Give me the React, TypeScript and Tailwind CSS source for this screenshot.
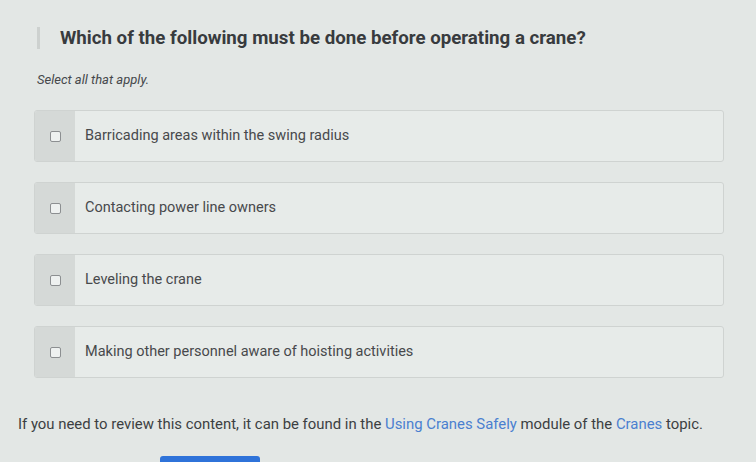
const options = [
  'Barricading areas within the swing radius',
  'Contacting power line owners',
  'Leveling the crane',
  'Making other personnel aware of hoisting activities',
]

export default function App() {
  return (
    <div className="h-[462px] w-[756px] overflow-hidden bg-[#e3e7e5] font-['Roboto',sans-serif]">
      <div className="mt-[26px] flex h-[24px] items-center pl-[37px]">
        <span className="h-[22px] w-[3px] bg-[#cdd1cf]" />
        <h1 className="ml-[20px] text-[18.7px] font-bold leading-[24px] text-[#383b3e]">
          Which of the following must be done before operating a crane?
        </h1>
      </div>
      <p className="mt-[22px] pl-[37px] text-[13px] italic leading-[16px] text-[#45484b]">
        Select all that apply.
      </p>
      <div className="ml-[34px] mt-[22px] flex w-[690px] flex-col gap-[20px]">
        {options.map((option) => (
          <label
            key={option}
            className="flex h-[52px] overflow-hidden rounded-[3px] border border-[#cfd3d1] bg-[#e7ebe9]"
          >
            <span className="flex w-[40px] shrink-0 items-center justify-center bg-[#d5d9d7]">
              <span className="h-[11px] w-[11px] rounded-[2px] border border-[#8c8f91] bg-[#eef1f0]" />
            </span>
            <span className="flex items-center pl-[10px] text-[14.5px] text-[#47494c]">{option}</span>
          </label>
        ))}
      </div>
      <p className="mt-[36px] pl-[18px] text-[14.9px] leading-[20px] text-[#3c3f42]">
        If you need to review this content, it can be found in the{' '}
        <span className="text-[#4a7fd0]">Using Cranes Safely</span> module of the{' '}
        <span className="text-[#4a7fd0]">Cranes</span> topic.
      </p>
      <div className="ml-[160px] mt-[22px] h-[8px] w-[100px] rounded-t-[3px] bg-[#2f73d9]" />
    </div>
  )
}
